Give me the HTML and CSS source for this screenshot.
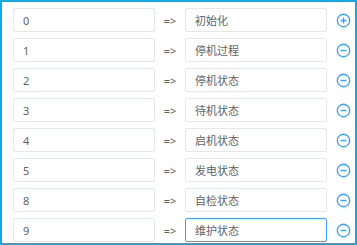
FILE: index.html
```html
<!DOCTYPE html>
<html lang="zh-CN">
<head>
    <meta charset="UTF-8">
    <meta name="viewport" content="width=device-width, initial-scale=1.0">
    <title>状态映射</title>
    <link rel="stylesheet" href="styles.css">
</head>
<body>
    <div class="panel">
        <div class="map-row">
            <input class="map-input" type="text" value="0">
            <span class="arrow">=&gt;</span>
            <input class="map-input" type="text" value="初始化">
            <span class="row-btn"><svg viewBox="0 0 16 16"><circle cx="8" cy="8" r="6.6"/><path d="M4.8 8h6.4M8 4.8v6.4"/></svg></span>
        </div>
        <div class="map-row">
            <input class="map-input" type="text" value="1">
            <span class="arrow">=&gt;</span>
            <input class="map-input" type="text" value="停机过程">
            <span class="row-btn"><svg viewBox="0 0 16 16"><circle cx="8" cy="8" r="6.6"/><path d="M4.8 8h6.4"/></svg></span>
        </div>
        <div class="map-row">
            <input class="map-input" type="text" value="2">
            <span class="arrow">=&gt;</span>
            <input class="map-input" type="text" value="停机状态">
            <span class="row-btn"><svg viewBox="0 0 16 16"><circle cx="8" cy="8" r="6.6"/><path d="M4.8 8h6.4"/></svg></span>
        </div>
        <div class="map-row">
            <input class="map-input" type="text" value="3">
            <span class="arrow">=&gt;</span>
            <input class="map-input" type="text" value="待机状态">
            <span class="row-btn"><svg viewBox="0 0 16 16"><circle cx="8" cy="8" r="6.6"/><path d="M4.8 8h6.4"/></svg></span>
        </div>
        <div class="map-row">
            <input class="map-input" type="text" value="4">
            <span class="arrow">=&gt;</span>
            <input class="map-input" type="text" value="启机状态">
            <span class="row-btn"><svg viewBox="0 0 16 16"><circle cx="8" cy="8" r="6.6"/><path d="M4.8 8h6.4"/></svg></span>
        </div>
        <div class="map-row">
            <input class="map-input" type="text" value="5">
            <span class="arrow">=&gt;</span>
            <input class="map-input" type="text" value="发电状态">
            <span class="row-btn"><svg viewBox="0 0 16 16"><circle cx="8" cy="8" r="6.6"/><path d="M4.8 8h6.4"/></svg></span>
        </div>
        <div class="map-row">
            <input class="map-input" type="text" value="8">
            <span class="arrow">=&gt;</span>
            <input class="map-input" type="text" value="自检状态">
            <span class="row-btn"><svg viewBox="0 0 16 16"><circle cx="8" cy="8" r="6.6"/><path d="M4.8 8h6.4"/></svg></span>
        </div>
        <div class="map-row">
            <input class="map-input" type="text" value="9">
            <span class="arrow">=&gt;</span>
            <input class="map-input focused" type="text" value="维护状态">
            <span class="row-btn"><svg viewBox="0 0 16 16"><circle cx="8" cy="8" r="6.6"/><path d="M4.8 8h6.4"/></svg></span>
        </div>
    </div>
</body>
</html>
```

FILE: styles.css
```css
body, html {
    margin: 0;
    padding: 0;
    font-family: "Noto Sans", "Noto Sans CJK SC", sans-serif;
    background: #ffffff;
}

.panel {
    width: 357px;
    height: 245px;
    box-sizing: border-box;
    border: 2px solid #12a8ec;
    padding: 6px 4px 1px 11px;
    display: flex;
    flex-direction: column;
    gap: 6px;
}

.map-row {
    display: flex;
    align-items: center;
    height: 24px;
}

.map-input {
    width: 142px;
    height: 24px;
    box-sizing: border-box;
    margin: 0;
    border: 1px solid #e4e7ed;
    border-radius: 2px;
    padding: 0 9px;
    font-family: "Noto Sans", "Noto Sans CJK SC", sans-serif;
    font-size: 11px;
    color: #606266;
    outline: none;
    background: #fff;
}

.map-input.focused {
    border-color: #409eff;
}

.arrow {
    width: 30px;
    text-align: center;
    font-size: 11px;
    color: #606266;
}

.row-btn {
    width: 15px;
    height: 15px;
    margin-left: 9px;
    display: flex;
}

.row-btn svg {
    width: 15px;
    height: 15px;
    fill: none;
    stroke: #409eff;
    stroke-width: 1.5;
}
```
